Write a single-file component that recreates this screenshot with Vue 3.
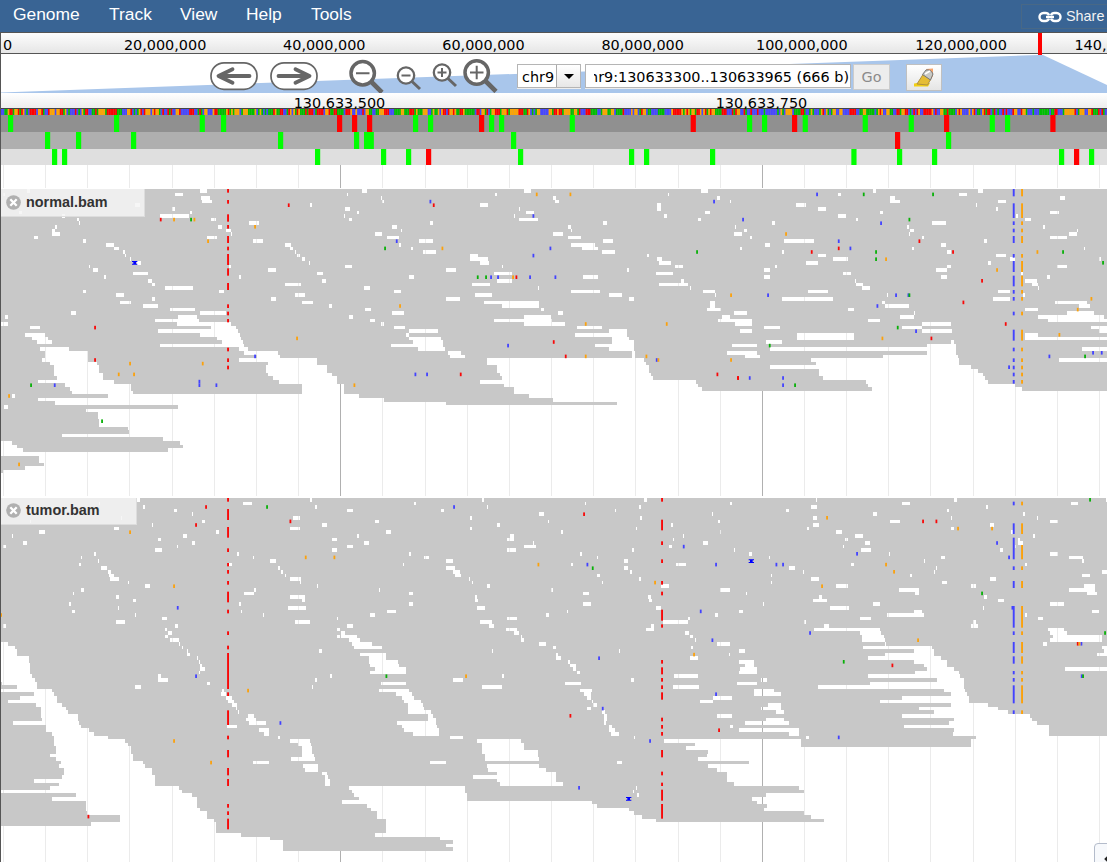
<script setup>
const menus = [
  { t: 'Genome', w: 96 },
  { t: 'Track', w: 71 },
  { t: 'View', w: 66 },
  { t: 'Help', w: 65 },
  { t: 'Tools', w: 60 }
]
const scale = ['20,000,000', '40,000,000', '60,000,000', '80,000,000', '100,000,000', '120,000,000', '140,000,000']
const gridX = []
for (let i = 0; i < 27; i++) gridX.push({ x: Math.floor(3.45 + i * 42.16), major: i === 8 || i === 18 })

// Reference sequence, one thin bar per base
const baseColors = ['#ffa500', '#00bf00', '#4747ff', '#ff0000']
let seed = 9130
const next = () => {
  seed = (seed * 1103515 + 12345) % 2147483648
  return seed / 2147483648
}
let current = 0
const bases = Array.from({ length: 666 }, (_, i) => {
  if (next() > 0.22) {
    const v = next()
    current = v < 0.28 ? 0 : v < 0.53 ? 1 : v < 0.78 ? 2 : 3
  }
  return { x: 1 + i * 1.68, c: baseColors[current] }
})

// Start / stop codons per reading frame, in thirds of a pixel
const codon = (s) => s.split(' ').map((v) => {
  const stop = v[0] === 'r'
  return { x: Number(stop ? v.slice(1) : v) / 3, stop }
})
const frames = [
  { k: 'a', marks: codon('24 342 599 663 r1011 r1056 r1101 1239 1284 r1437 1467 1497 1709 r2072 2241 2286 r2376 2408 2588 2726 r2832 2969 3015 r3151') },
  { k: 'b', marks: codon('135 228 393 834 1062 1092 1106 1533 r2685 2838') },
  { k: 'c', marks: codon('156 186 945 1143 1218 r1278 1554 1887 1932 2130 2554 2691 2796 3177 r3222 3267') }
]

const nums = (s, n) => {
  const a = s.trim().split(/[\s;]+/).map(Number)
  const out = []
  for (let i = 0; i + n <= a.length; i += n) out.push(a.slice(i, i + n))
  return out
}
const ROW = 10.8
const rowTop = (y, base) => base + Math.floor((y - base) / ROW) * ROW
const gaps = (s, base) => nums(s, 3).map(([x, y, w]) => ({ x, y: rowTop(y, base), w }))
const marks = (o, base) => Object.entries(o).flatMap(([c, s]) => nums(s, 2).map(([x, y]) => ({ c, x: x - 2.5, y: rowTop(y, base) })))

const normalBlue = '27 49 70 114 124 135 146 157 168 189 222 233 243 276 287 319 330 341 351 362 395 406 449 482 503 514 535 546 557 568 578 589 600 611'
const tumorBlue = '35 46 100 132 143 208 229 240 273 294 348 413 424 435 456 489 499 521 543 553 564 575 586 640 661 672'

const normalTiles = [
  {
    ox: 0,
    gaps: gaps(`10 43 4;82 32 9;405 75 15;57 97 8;187 108 9;232 119 5;236 130 5;166 140 5;156 151 10;156 162 25;102 173 13;248 184 9;526 43 24;601 32 20;603 54 28;606 65 30;517 86 7;571 97 4;480 108 86;632 119 15;653 140 14;678 151 14;693 162 3;621 173 30;1040 43 4;1087 32 14;931 75 4;1036 86 14;1072 97 4;1031 108 4;1046 119 9;748 130 30;758 184 30;854 194 20;869 205 9;884 216 4;890 227 9;905 238 9;926 248 4;805 270 22;688 259 4;950 281 20;967 302 12;1036 259 19;718 292 4;854 313 50;886 346 28;814 356 13;905 367 35;986 378 9;1091 324 19;1096 389 16;1046 410 14;657 335 14;319 194 24;343 205 15;369 216 5;374 227 4;389 238 4;411 248 13;400 281 44;445 302 10;455 313 9;267 259 4;278 270 15;313 292 4;495 324 85;248 335 9;348 346 25;359 367 33;430 378 44;455 356 9;510 389 75;601 400 77;213 400 14;15 410 9;3 432 21;91 443 30;535 410 56;465 421 132;531 432 162;632 443 76;474 454 240;601 464 119;652 475 71;667 486 62;480 497 253;75 464 61;96 475 48;111 486 45;121 508 86;36 649 9;12 681 12`, 27),
    voids: 'M121,502H207V513H264V545H291V556H297V578H308V599H343V611H393V632H400V643H905V611H838V600H820V589H803V578H799V556H803V545H718V535H772V524H733V513H718V502H743V513H835V524H840V535H950V556H981V578H996V589H1011V611H1031V643H1076V653H1110V900H0V880H10V869H75V859H131V848H116V827H0V783H36V794H51V805H70V815H505V805H550V794H541V783H490V772H186V761H388V751H384V740H298V718H293V697H258V686H535V675H166V664H115V653H324V643H217V632H211V621H195V610H115V599H171V588H162V556H151V545H127V535H136V513H121Z',
    marks: marks({ r: '482 119 866 75 285 443 285 540', o: '522 119 583 119 624 184 765 140 891 475 1063 616 390 551 356 584 402 584 608 551 27 649 57 854', g: '573 119 93 616 306 724', b: '765 529 598 605 598 616 649 616 164 616' }, 27),
    lines: [{ x: 684, c: 'r', segs: nums('27 38 60 71 103 125 135 146 168 189 200 211 222 255 265 287 309 330 373 384 395 406 417 427 503 514 535 546 557 568', 2) }],
    ins: [[404, 248]]
  },
  {
    ox: 1110,
    gaps: gaps(`463 32 19;376 43 4;32 54 4;37 65 4;331 75 24;447 86 4;468 97 23;432 108 4;447 119 56;179 130 9;67 140 15;93 151 4;16 162 20;52 173 35;148 184 40;88 194 4;124 205 4;159 216 39;549 54 9;555 65 13;595 140 9;603 151 4;549 162 29;595 173 39;604 194 70;635 205 50;700 184 30;696 216 39;700 130 10;893 43 4;862 75 10;862 86 10;883 108 9;994 32 20;1040 54 9;1080 65 4;1005 97 14;984 119 10;1095 140 4;1091 162 19;832 227 4;862 238 15;868 248 34;914 259 24;772 270 4;858 281 50;640 292 45;934 302 9;868 313 85;959 324 4;1000 335 35;1035 346 4;300 227 25;300 238 55;331 248 25;396 259 4;229 270 30;372 281 55;118 292 15;381 302 45;305 313 55;503 324 4;72 335 20;315 346 50;229 356 40;603 335 86;717 346 39;778 356 13;341 367 166;396 378 111;513 389 9;0 389 2;67 400 34;564 400 14;1020 367 14;1020 378 14;1010 389 44;1091 400 19;1056 410 24;1045 421 65;1096 432 14;0 421 16;32 432 9;372 421 175;463 410 80;463 432 121;72 443 34;118 454 86;108 464 10;118 475 96;128 486 90;62 497 156;143 508 81;234 518 40;240 529 45;620 443 75;717 454 54;615 464 156;726 475 51;726 486 65;676 497 115;717 508 75;787 518 9;787 529 9;1087 497 23;1071 518 39`, 27),
    voids: 'M350,535H822V545H829V556H837V578H843V589H848V600H979V611H985V621H995V632H1110V900H0V654H42V665H229V676H741V665H549V654H477V643H432V621H402V611H331V600H396V589H391V578H381V556H350Z',
    marks: marks({ b: '181 65 490 108 80 184 541 205 490 227 363 292 384 292 480 292 556 292 1032 65 414 497 860 540 136 584 171 584', r: '191 75 439 292 551 486 587 529 272 584 1042 584 1104 594', o: '500 43 601 43 217 205 429 292 90 378 647 432 890 432 1083 346 647 529 829 529 865 540 1083 540', g: '45 205 323 292 348 292 981 216' }, 27),
    lines: [],
    ins: []
  },
  {
    ox: 2211,
    gaps: gaps(`409 32 9;303 43 9;459 54 15;459 65 30;177 75 29;243 86 23;430 97 9;303 108 24;358 119 4;105 130 10;585 130 41;511 140 4;520 151 10;515 162 4;556 173 4;667 43 24;723 32 14;717 75 4;783 65 24;778 86 4;838 108 4;865 119 18;969 54 15;939 97 26;919 140 4;1020 151 4;995 162 24;940 173 49;741 184 10;0 162 14;20 151 9;40 173 4;85 194 15;141 184 90;10 205 4;136 216 4;243 227 23;288 238 45;207 248 35;115 259 4;81 270 18;81 292 18;319 281 24;354 302 4;358 313 20;374 324 24;526 205 4;612 194 14;630 216 11;630 259 11;596 270 34;612 292 18;778 227 30;819 238 14;753 248 8;853 281 4;960 259 29;1040 205 4;1087 238 4;930 292 9;865 302 34;885 313 18;903 324 4;212 335 60;136 356 151;450 346 4;435 367 9;445 378 70;334 389 18;490 410 40;531 400 4;393 421 35;783 335 35;768 356 50;859 346 4;955 367 95;1026 378 34;865 389 38;990 400 80;904 410 196;934 421 176;0 400 30;0 421 45;0 432 45;10 454 35;82 443 48;495 443 60;555 432 86;555 454 90;181 464 171;181 475 171;865 464 38;865 475 245;1062 443 48;1087 454 23;86 486 49;0 497 60;100 508 470;0 518 60;25 529 45;642 486 10;1035 508 75;966 540 144;100 562 146`, 27),
    voids: 'M571,492H657V524H662V535H667V556H702V567H723V578H738V589H743V600H753V611H834V621H855V632H1110V900H0V632H404V621H393V611H388V600H257V589H247V567H237V545H222V535H438V524H571Z',
    marks: marks({ b: '240 43 18 119 432 130 305 184 340 205 93 346 477 346 514 346 421 378 537 454 38 594 138 594 138 616 816 562 937 529 1068 518 1094 518', r: '547 184 224 216 305 205 648 216 735 302 679 367 806 432 583 475 3 594', g: '380 43 588 43 517 119 417 216 417 238 517 346 482 443 98 497 174 616 978 216 1098 248 1044 529', o: '147 162 447 238 780 270 901 216 436 475 1063 356 1022 389 967 464' }, 27),
    lines: [{ x: 830, c: 'b', segs: nums(normalBlue, 2) }, { x: 855, c: 'o', segs: nums(normalBlue, 2) }],
    ins: []
  }
]

const tumorTiles = [
  {
    ox: 0,
    gaps: gaps(`412 29 7;297 40 4;430 51 4;521 62 10;576 73 4;363 83 4;606 94 10;90 94 4;455 105 4;343 116 15;117 127 18;36 137 4;70 159 10;10 170 9;474 148 10;550 137 10;576 159 9;531 170 4;465 180 20;647 127 9;728 40 29;931 29 4;946 51 4;879 83 20;869 116 30;966 105 14;1041 62 19;1072 137 4;996 148 14;1091 159 15;1041 170 19;996 180 14;712 191 4;758 202 4;283 191 4;243 202 4;293 213 4;238 224 4;303 234 19;323 245 9;328 256 15;329 267 29;384 278 4;435 288 14;243 299 9;218 310 4;348 321 9;400 332 9;208 342 4;354 353 4;217 364 9;405 375 4;348 396 26;10 407 9;688 224 9;809 213 18;835 234 4;844 245 4;854 256 4;869 267 35;900 278 4;950 288 4;763 299 4;733 310 28;869 321 45;905 332 9;718 342 4;864 353 55;723 364 4;789 375 4;886 396 43;1011 386 4;486 386 14;526 407 9;496 418 4;505 429 10;496 440 9;510 450 26;536 461 4;546 472 4;561 483 4;561 494 9;591 504 4;596 515 4;601 526 4;601 537 15;597 548 4;474 558 10;474 569 31;621 580 10;405 591 19;1041 407 18;1011 418 9;1024 429 12;1011 440 9;1024 440 46;1046 450 34;1056 461 54;1062 472 48;1081 494 29;1106 504 4;1106 515 4;956 483 9;991 558 4;946 569 4;936 591 4;667 602 4;663 612 14;678 623 18;684 634 18;697 645 13;708 656 4;713 666 4;743 677 18;738 688 30;748 699 50;682 710 30;778 721 30;793 731 15;835 742 4;869 753 60;895 764 38;905 775 30;905 786 30;905 796 38;874 807 70;758 818 50;910 829 44;915 840 38;966 850 14;976 861 9;976 872 13;976 883 14;1046 893 64;1056 904 54;1061 915 49;1077 926 33;1026 937 84;1101 948 9`, 24),
    voids: 'M0,456H25V467H46V478H51V499H87V520H91V553H97V564H106V575H111V597H157V607H162V618H172V640H187V651H197V661H203V672H233V694H238V705H243V715H267V726H283V737H324V748H374V758H385V769H393V791H399V813H430V823H435V834H455V855H465V888H536V899H546V910H577V920H591V953H601V964H621V986H642V996H648V1029H723V1040H809V1050H849V1083H1110V1116H0V1007H272V996H359V975H262V964H258V932H156V921H227V910H0V899H151V888H177V878H101V867H187V856H191V834H177V823H182V813H167V802H151V791H167V769H162V737H157V726H137V705H40V694H127V683H122V651H107V640H25V629H60V618H101V607H0V597H51V586H5V575H0Z',
    marks: marks({ r: '618 51 588 105 871 94 265 980', o: '390 127 917 202 1003 202 522 288 3 375 744 602 522 753 633 818', b: '533 353 588 558 841 699', g: '801 51' }, 24),
    lines: [{ x: 684, c: 'r', segs: nums('24 35 57 90 111 143 175 186 219 229 240 251 273 284 305 337 359 370 424 435 467 478 489 597 607 618 661 705 737 748 780 802 834 856 867 888 942 953 964 975 986 1018', 2) }],
    ins: []
  },
  {
    ox: 1110,
    gaps: gaps(`337 29 4;133 40 4;351 51 4;214 62 9;301 83 4;16 94 10;382 105 9;48 127 14;301 116 4;508 73 14;534 94 4;574 127 4;421 137 11;412 148 20;463 170 34;488 159 4;412 180 25;118 191 4;163 202 15;98 224 4;229 213 20;229 234 25;250 245 20;256 256 18;296 267 4;306 278 4;351 288 9;27 299 4;118 310 10;118 342 10;52 364 25;0 375 16;645 40 4;823 29 8;735 62 4;808 51 4;811 83 4;797 116 4;904 105 4;939 137 4;908 148 4;898 170 9;1000 159 13;1025 73 4;1045 94 4;1050 127 4;1081 40 4;1091 180 4;787 180 4;631 191 4;681 202 4;604 224 4;762 213 13;762 234 13;781 245 4;681 256 8;808 267 4;696 278 4;544 299 4;640 310 18;640 342 24;316 321 4;316 332 9;321 353 24;590 364 4;528 375 9;331 396 34;357 407 14;412 386 29;407 418 34;432 429 14;453 440 4;453 450 9;508 461 19;549 472 9;559 494 4;559 504 14;919 224 29;874 288 23;1051 299 29;833 321 9;838 332 9;858 353 14;1036 375 9;955 386 4;878 396 76;843 407 9;828 418 24;944 429 14;960 440 9;974 450 4;964 472 4;1041 461 39;960 504 24;1076 494 4;366 483 4;747 483 4;595 515 4;599 526 20;609 537 10;620 548 9;397 558 4;250 569 29;337 591 58;585 580 49;782 569 9;913 558 70;908 591 80;1106 515 4;1106 548 4;1101 580 9;631 602 34;641 612 23;650 623 14;666 634 4;670 645 10;650 656 14;697 666 8;702 677 8;702 688 8;702 699 5;717 710 9;717 721 18;722 731 24;792 742 4;741 818 14;1030 623 55;990 634 40;1041 677 44;1081 710 9;1106 721 4;0 461 5;0 472 36;0 494 47;0 504 47;0 515 83;0 526 87;15 537 93;0 548 108;32 580 75;27 602 90;77 612 50;97 623 35;102 634 52;113 645 45;113 656 50;113 666 70;173 677 15;173 688 25;82 699 116;97 710 105;102 721 105;128 731 80;240 742 39;179 818 50;229 1067 20;788 904 4;797 893 4;802 915 4;320 753 132;336 764 126;336 775 126;336 786 167;345 796 158;345 807 163;351 829 157;355 840 173;381 850 177;310 861 248;381 872 177;391 883 188;882 753 228;974 764 136;948 775 162;1014 786 96;1010 796 100;984 807 126;1014 829 96;1040 840 70;1071 850 39;1071 861 39;1071 872 39;1091 883 19`, 24),
    voids: 'M0,888H285V910H291V932H666V942H681V953H777V964H792V975H816V986H858V996H1110V1116H0V1083H249V1050H209V1040H15V1029H47V986H22V964H3V953H0Z',
    marks: marks({ b: '252 51 652 224 941 170 1038 224 992 364 1027 450 687 504 1038 612 698 656 840 753 627 893', r: '642 73 601 677 1047 721', o: '505 224 855 278 972 494 288 558', g: '668 234 49 558' }, 24),
    lines: [{ x: 876, c: 'r', segs: nums('24 35 89 121 154 165 208 219 273 284 305 316 359 392 403 413 510 521 532 553 564 575 586 597 607 629 683 694 705 716 726 737 780 802 845 856 878 888 899 932 942 986', 2) }],
    ins: [[776, 926]]
  },
  {
    ox: 2211,
    gaps: gaps(`237 29 4;221 51 20;146 62 9;227 83 14;227 105 18;211 116 4;298 127 18;354 137 24;323 148 9;384 159 14;318 170 4;373 180 30;36 191 8;96 202 4;156 234 19;197 245 4;101 256 4;101 278 4;221 267 25;298 288 34;26 310 4;247 321 9;227 332 44;78 342 4;278 353 59;5 364 14;409 73 10;459 94 30;495 40 24;652 29 8;631 62 4;642 83 4;642 116 9;748 51 4;758 105 14;859 73 4;900 83 4;823 127 4;889 137 4;844 148 4;844 159 14;834 170 4;788 180 9;940 94 24;1001 40 23;1106 29 4;940 191 24;995 202 44;1036 213 4;1096 245 14;1036 256 24;455 191 4;343 224 9;561 213 4;612 202 13;597 234 4;591 245 4;520 256 4;616 278 14;758 267 19;865 224 4;702 288 14;742 321 9;783 332 19;738 353 4;485 299 60;535 310 10;409 342 19;531 364 23;450 375 110;369 386 34;202 396 4;262 407 14;232 418 197;369 429 64;374 440 66;374 450 70;444 461 4;378 472 207;531 483 60;445 494 146;393 504 218;531 515 100;561 526 70;571 537 80;535 548 130;393 558 275;865 375 4;601 569 81;399 580 283;242 591 440;621 602 62;641 612 50;495 623 202;430 634 267;702 407 20;707 396 9;904 386 14;934 418 46;939 429 50;949 440 145;939 450 155;919 461 11;1081 494 29;1096 472 14;1101 483 9;985 537 125;995 299 80;1041 288 34;1051 310 29;940 342 40;1066 364 19;5 483 20;5 515 45;25 526 25;10 537 50;5 548 55;72 569 18;0 580 60;51 602 59;51 612 80;92 645 39;72 656 59;116 666 24;86 688 54;25 699 130;5 721 180;156 731 30;207 742 9`, 24),
    voids: 'M641,640H753V651H783V661H814V672H880V683H885V694H900V705H936V738H1110V1116H0V996H262V986H221V975H202V964H80V953H91V942H60V932H45V921H86V910H202V899H187V888H0V823H36V813H0V748H192V770H702V748H717V737H647V726H651V715H500V705H636V694H651V683H495V672H590V661H546V651H641Z',
    marks: marks({ b: '360 191 118 224 138 224 780 159 816 202 219 429 305 742 826 353 1033 461 1034 558', r: '558 94 598 94 466 526 1022 461', o: '270 83 663 116 765 116 447 224 471 245 255 288 543 450 1027 461', g: '1059 29 735 310 320 515 1104 429 1038 558' }, 24),
    lines: [
      { x: 830, c: 'b', segs: nums(tumorBlue, 2) },
      { x: 855, c: 'o', segs: nums(tumorBlue.replace('143 208', '165 208'), 2) }
    ],
    ins: [[43, 213]]
  }
]

const tracks = [
  { id: 'normal', name: 'normal.bam', h: 307, base: 27, end: 900, tiles: normalTiles },
  { id: 'tumor', name: 'tumor.bam', h: 364, base: 24, end: 1116, tiles: tumorTiles }
]
</script>

<template>
  <div class="browser">
    <header class="menubar">
      <nav class="menus">
        <span v-for="m in menus" :key="m.t" :style="{ width: m.w + 'px' }">{{ m.t }}</span>
      </nav>
      <div class="share">
        <svg width="24" height="12" viewBox="0 0 24 12" fill="none" stroke="#fff" stroke-width="2.4">
          <path d="M11 4.300Q10.200 2 7.500 2H5.500A4 4 0 0 0 5.500 10H7.500Q10.200 10 11 7.700" />
          <path d="M13 4.300Q13.800 2 16.500 2H18.500A4 4 0 0 1 18.500 10H16.500Q13.800 10 13 7.700" />
          <path d="M8 6H16" />
        </svg>
        <span>Share</span>
      </div>
    </header>

    <div class="overview">
      <span class="zero">0</span>
      <span v-for="s in scale" :key="s" class="tick">{{ s }}</span>
      <i class="here"></i>
    </div>

    <div class="nav">
      <svg class="trapezoid" width="1107" height="39" viewBox="0 0 1107 39">
        <path d="M1 38.500L1038 1H1043L1107 31V39H1Z" fill="#a9c6eb" />
      </svg>
      <div class="controls">
        <svg class="icons" width="295" height="39" viewBox="205 54 295 39" fill="none" stroke="#666" stroke-linecap="round" stroke-linejoin="round">
          <g fill="#fff" stroke-width="1.700">
            <rect x="211" y="62.800" width="46" height="26.500" rx="13" />
            <rect x="271" y="62.800" width="46" height="26.500" rx="13" />
          </g>
          <g stroke-width="3.800">
            <path d="M249.500 76H219M232.500 69.200L218.500 76L232.500 82.800" />
            <path d="M278.500 76H309M295.500 69.200L309.500 76L295.500 82.800" />
          </g>
          <g fill="#fff">
            <circle cx="362.700" cy="73.300" r="11.700" stroke-width="3.500" />
            <circle cx="406" cy="75.500" r="8.200" stroke-width="2.300" />
            <circle cx="442" cy="72.500" r="8.200" stroke-width="2.300" />
            <circle cx="476.700" cy="72.500" r="11.700" stroke-width="3.500" />
          </g>
          <g stroke-width="4.600" stroke-linecap="butt">
            <path d="M371 81.500L382 92.500M485 80.500L496 91.500" />
            <path d="M412 81.500L420 89M448 78.500L456 86" stroke-width="3" />
          </g>
          <g stroke-width="2" stroke-linecap="butt">
            <path d="M356 73.300H369.500M401.500 75.500H410.500M437.500 72.500H446.500M442 68V77M470 72.500H483.500M476.700 65.800V79.200" />
          </g>
        </svg>
        <div class="chrom"><span>chr9</span><b><i></i></b></div>
        <div class="location"><span>chr9:130633300..130633965 (666 b)</span></div>
        <div class="go">Go</div>
        <div class="hilite">
          <svg width="22" height="20" viewBox="0 0 22 20">
            <path d="M13 1l7-.5V8l-3 5z" fill="#f6a36b" />
            <path d="M1 15.500l7-1 9 .5-2 3.500H1z" fill="#f2cf12" />
            <path d="M4 16L10 6.500l7.500 5-3 5.500z" fill="#e5bd35" stroke="#ae9042" />
            <path d="M9.500 6.500L13 2q5-1 7 4l-2.500 6z" fill="#c8c9c5" stroke="#777" />
            <path d="M12 6l5-3" stroke="#fff" stroke-width="1.500" />
          </svg>
        </div>
      </div>
    </div>

    <div class="ruler"><span>130,633,500</span><span>130,633,750</span></div>

    <svg class="bases" width="1107" height="6" viewBox="0 0 1107 6">
      <rect v-for="(b, i) in bases" :key="i" :x="b.x" y="0" width="1.75" height="6" :fill="b.c" />
    </svg>
    <svg v-for="f in frames" :key="f.k" class="frame" :class="f.k" width="1107">
      <rect v-for="m in f.marks" :key="m.x" :x="m.x" y="0" width="5.200" height="17" :fill="m.stop ? '#f00' : '#0f0'" />
    </svg>

    <svg class="spacer" width="1107" height="23">
      <rect v-for="g in gridX" :key="g.x" :x="g.x" y="0" width="1" height="23" :fill="g.major ? '#b0b0b0' : '#ebebeb'" />
    </svg>

    <section v-for="t in tracks" :key="t.id" class="track" :class="t.id">
      <svg width="1107" :height="t.h" :viewBox="`0 ${t.base} 3321 ${t.h * 3}`">
        <defs>
          <mask :id="t.id" maskUnits="userSpaceOnUse" x="0" :y="t.base" width="3321" :height="t.h * 3">
            <rect x="0" :y="t.base" width="3321" :height="t.end - t.base" fill="#fff" />
            <g v-for="tile in t.tiles" :key="tile.ox" :transform="`translate(${tile.ox})`" shape-rendering="crispEdges">
              <path :d="tile.voids" fill="#000" />
              <rect v-for="(g, i) in tile.gaps" :key="i" :x="g.x" :y="g.y" :width="g.w" height="10.800" fill="#000" />
            </g>
          </mask>
        </defs>
        <rect v-for="g in gridX" :key="g.x" :x="g.x * 3" :y="t.base" width="3" :height="t.h * 3" :fill="g.major ? '#b0b0b0' : '#ebebeb'" />
        <rect x="0" :y="t.base" width="3321" :height="t.end - t.base" fill="#c8c8c8" :mask="`url(#${t.id})`" />
        <g v-for="tile in t.tiles" :key="tile.ox" :transform="`translate(${tile.ox})`">
          <rect v-for="(m, i) in tile.marks" :key="i" :class="m.c" :x="m.x" :y="m.y" width="5.400" height="10.800" />
          <g v-for="l in tile.lines" :key="l.x" :class="l.c">
            <rect v-for="s in l.segs" :key="s[0]" :x="l.x - 2.700" :y="s[0]" width="5.700" :height="s[1] - s[0]" />
          </g>
          <path v-for="n in tile.ins" :key="n[0]" class="ins" :d="`M${n[0] - 8},${n[1] - 5}h16v3h-4v5h4v3h-16v-3h4v-5h-4z`" />
        </g>
      </svg>
      <div class="label">
        <svg width="15" height="15" viewBox="0 0 15 15">
          <circle cx="7.500" cy="7.500" r="7.300" fill="#b0b0b0" />
          <path d="M4.300 4.300l6.400 6.400M10.700 4.300l-6.400 6.400" stroke="#fff" stroke-width="2.300" />
        </svg>
        <span>{{ t.name }}</span>
      </div>
    </section>
    <div class="corner"><i></i></div>
  </div>
</template>

<style>
html, body { overflow: hidden; }
</style>

<style scoped>
* { box-sizing: border-box; }
.browser { position: relative; width: 1107px; height: 862px; overflow: hidden; background: #fff; font: 14.4px/17px "DejaVu Sans", sans-serif; color: #000; }
.browser::after { content: ""; position: absolute; left: 0; top: 32px; width: 1px; height: 830px; background: #555; }
svg { display: block; flex: none; }
.menubar { height: 33px; background: #396494; border-bottom: 1px solid #555; display: flex; justify-content: space-between; font-family: "Liberation Sans", sans-serif; color: #fff; }
.menus { display: flex; padding-left: 13px; font-size: 17.400px; line-height: 29px; }
.share { margin-top: 4px; width: 86px; height: 25px; border: 1px solid #486886; border-right: 0; padding-left: 16px; display: flex; align-items: center; gap: 4px; font-size: 14.400px; line-height: 22px; white-space: nowrap; }
.share svg { margin-top: 1px; }
.share span { margin-top: -2px; color: #f2f2f2; }
.overview { position: relative; height: 21px; display: flex; background: linear-gradient(#fdfdfd, #e6e6e6); border-bottom: 1px solid #555; line-height: 24px; overflow: visible; }
.zero { width: 85.500px; padding-left: 3px; flex: none; }
.tick { width: 159.200px; flex: none; text-align: center; }
.here { position: absolute; left: 1038px; top: 0; width: 4px; height: 22px; background: #f00; z-index: 2; }
.nav { position: relative; height: 39px; }
.trapezoid { position: absolute; left: 0; top: 0; }
.controls { position: relative; display: flex; padding-left: 205px; }
.chrom { margin: 10px 0 0 17px; width: 64px; height: 24px; display: flex; background: #fff; border: 1px solid #b5b5b5; line-height: 24px; box-shadow: 0 1px #eee; }
.chrom span { width: 38px; padding-left: 4px; overflow: hidden; }
.chrom b { flex: 1; border-left: 1px solid #aaa; background: linear-gradient(#fff, #e7e7e7); display: flex; align-items: center; justify-content: center; }
.chrom i { border: 5px solid transparent; border-top-color: #000; border-bottom: 0; }
.location { margin: 10px 0 0 4px; width: 266px; height: 24px; background: #fff; border: 1px solid #b5b5b5; line-height: 24px; padding: 0 1px 0 8px; box-shadow: 0 1px #eee; }
.location span { display: flex; justify-content: flex-end; overflow: hidden; white-space: nowrap; }
.go { margin: 10px 0 0 2px; width: 37px; height: 26px; background: #ededed; border: 1px solid #ccc; color: #8b8b8b; text-align: center; line-height: 25px; }
.hilite { margin: 10px 0 0 16px; width: 36px; height: 27px; background: linear-gradient(#fff, #e5e5e5); border: 1px solid #c0c0c0; padding: 3px 0 0 6px; }
.ruler { height: 16px; padding-left: 260px; display: flex; background: linear-gradient(#fff, #ededed); border-bottom: 1px solid #444; line-height: 21px; }
.ruler span { width: 159px; margin-right: 263px; text-align: center; flex: none; }
.bases { background: #999; }
.frame.a { height: 17px; background: #909090; }
.frame.b { height: 17px; background: #afafaf; }
.frame.c { height: 16px; background: #dfdfdf; }
.spacer { margin-bottom: 1px; }
.track { position: relative; }
.normal { margin-bottom: 2px; }
.r { fill: #f80808; }
.g { fill: #08b008; }
.b { fill: #4242ff; }
.o { fill: #fba10c; }
.ins { fill: #00f; }
.label { position: absolute; left: 1px; top: 0; width: 144px; height: 28px; background: rgba(245, 245, 245, .85); border: solid #ddd; border-width: 0 1px 1px 0; display: flex; padding: 6px 0 0 5px; gap: 5px; font: bold 14.400px/15px "Liberation Sans", sans-serif; color: #333; }
.tumor .label { width: 136px; height: 27px; padding-top: 5px; }
.corner { position: absolute; left: 1094px; top: 843px; width: 20px; height: 24px; border: 1px solid #b4bccb; border-radius: 4px; background: #f7f9fc; }
.corner i { position: absolute; left: 10px; top: 13px; width: 4px; height: 4px; background: #222; transform: rotate(45deg); }
</style>
